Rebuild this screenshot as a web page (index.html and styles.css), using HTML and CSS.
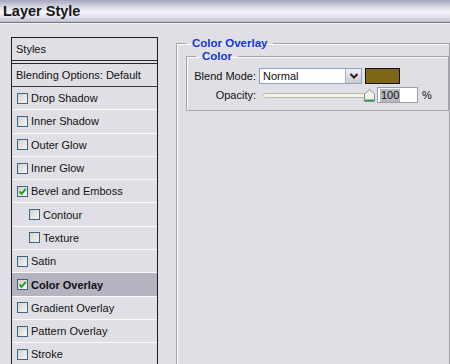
FILE: index.html
```html
<!DOCTYPE html>
<html lang="en">
<head>
  <meta charset="UTF-8" />
  <title>Layer Style</title>
  <link rel="stylesheet" href="styles.css">
</head>
<body>
  <div class="titlebar">Layer Style</div>

  <div class="main">
    <div class="styles-list">
      <div class="list-head">Styles</div>
      <div class="list-blend">Blending Options: Default</div>
      <div class="row"><span class="box"></span>Drop Shadow</div>
      <div class="row"><span class="box"></span>Inner Shadow</div>
      <div class="row"><span class="box"></span>Outer Glow</div>
      <div class="row"><span class="box"></span>Inner Glow</div>
      <div class="row"><span class="box checked"><svg viewBox="0 0 9 9" width="9" height="9"><path d="M1.5 4.5 L3.6 6.8 L7.8 1.8" fill="none" stroke="#1fa31f" stroke-width="2"/></svg></span>Bevel and Emboss</div>
      <div class="row sub"><span class="box"></span>Contour</div>
      <div class="row sub"><span class="box"></span>Texture</div>
      <div class="row"><span class="box"></span>Satin</div>
      <div class="row active"><span class="box checked"><svg viewBox="0 0 9 9" width="9" height="9"><path d="M1.5 4.5 L3.6 6.8 L7.8 1.8" fill="none" stroke="#1fa31f" stroke-width="2"/></svg></span>Color Overlay</div>
      <div class="row"><span class="box"></span>Gradient Overlay</div>
      <div class="row"><span class="box"></span>Pattern Overlay</div>
      <div class="row"><span class="box"></span>Stroke</div>
    </div>

    <fieldset class="group outer">
      <legend>Color Overlay</legend>
      <fieldset class="group inner">
        <legend>Color</legend>
        <div class="form">
          <label>Blend Mode:</label>
          <div class="ctrl">
            <div class="select">
              <span class="select-text">Normal</span>
              <span class="select-btn"><svg viewBox="0 0 10 8" width="10" height="8"><path d="M1.5 2 L5 5.5 L8.5 2" fill="none" stroke="#222" stroke-width="2"/></svg></span>
            </div>
            <div class="swatch"></div>
          </div>
          <label>Opacity:</label>
          <div class="ctrl">
            <div class="slider">
              <div class="track"></div>
              <svg class="thumb" viewBox="0 0 11 13" width="11" height="13"><path d="M0.5 5 L5.5 0.5 L10.5 5 L10.5 12.5 L0.5 12.5 Z" fill="#f2f2ee" stroke="#8a8a8a"/><path d="M1 10.5 H10 V12 H1 Z" fill="#1eaa3c"/></svg>
            </div>
            <div class="num"><span class="sel">100</span></div>
            <span class="pct">%</span>
          </div>
        </div>
      </fieldset>
    </fieldset>
  </div>
</body>
</html>
```

FILE: styles.css
```css
html, body {
  margin: 0;
  height: 364px;
  overflow: hidden;
}
body {
  background: #e0dfe5;
  font-family: "Liberation Sans", Arial, sans-serif;
  font-size: 11px;
  color: #111;
}
.titlebar {
  height: 22px;
  line-height: 23px;
  padding-left: 3px;
  font-size: 14.5px;
  font-weight: bold;
  color: #151515;
  background: linear-gradient(#a5a5bd 0%, #d6d6e4 30%, #f5f5fa 55%, #e2e2eb 75%, #bfbfd0 100%);
  border-bottom: 1px solid #75757f;
  box-shadow: 0 1px 0 #f2f2f5;
}
.main {
  display: flex;
  align-items: flex-start;
  padding: 14px 0 0 11px;
}
.styles-list {
  width: 145px;
  flex: none;
  border: 1px solid #1e1e22;
  border-bottom: none;
  background: #e0dfe5;
}
.list-head {
  height: 22px;
  line-height: 22px;
  padding-left: 4px;
  border-bottom: 4px double #2a2a2e;
}
.list-blend {
  height: 22px;
  line-height: 23px;
  padding-left: 4px;
  border-bottom: 1px solid #3a3a3e;
}
.row {
  height: 22.3px;
  display: flex;
  align-items: center;
  gap: 3px;
  padding-left: 5px;
  border-bottom: 1px solid #fbfbfd;
}
.row.sub {
  padding-left: 17px;
}
.row.active {
  background: #b4b3bf;
  font-weight: bold;
}
.box {
  width: 9px;
  height: 9px;
  border: 1px solid #3f6586;
  background: linear-gradient(135deg, #d2d2ce, #f6f6f4);
  display: flex;
  align-items: center;
  justify-content: center;
  flex: none;
}
.group {
  margin: 0;
  border: 1px solid #a3a3ab;
  box-shadow: inset 1px 1px 0 #fbfbfd;
}
.group legend {
  padding: 0 6px;
  color: #1236dc;
  font-weight: bold;
  font-size: 11.5px;
  line-height: 13px;
}
.outer {
  margin: 0 0 0 18px;
  padding: 0 0 0 9px;
  width: 400px;
  height: 400px;
  margin-top: 0;
}
.inner {
  padding: 5px 0 7px 0;
}
.inner legend {
  margin-left: 9px;
}
.form {
  display: grid;
  grid-template-columns: 69px auto;
  grid-auto-rows: 16px;
  column-gap: 3px;
  row-gap: 3px;
  align-items: center;
}
.form label {
  text-align: right;
  color: #111;
}
.ctrl {
  display: flex;
  align-items: center;
  height: 16px;
}
.select {
  width: 101px;
  height: 14px;
  border: 1px solid #8ba4bd;
  background: #fff;
  display: flex;
  align-items: center;
}
.select-text {
  flex: 1;
  padding-left: 3px;
}
.select-btn {
  width: 15px;
  height: 14px;
  background: linear-gradient(#f0f0f4, #c9c9d4);
  border-left: 1px solid #a8b2c4;
  display: flex;
  align-items: center;
  justify-content: center;
}
.swatch {
  margin-left: 3px;
  width: 33px;
  height: 14px;
  border: 1px solid #111;
  background: #806617;
}
.slider {
  position: relative;
  width: 113px;
  height: 16px;
  padding-left: 4px;
  display: flex;
  align-items: center;
}
.track {
  width: 104px;
  height: 3px;
  border: 1px solid #b9b9b0;
  border-radius: 3px;
  background: #f4f4e6;
}
.thumb {
  position: absolute;
  left: 105px;
  top: 2px;
}
.num {
  margin-left: 1px;
  width: 37px;
  height: 14px;
  border: 1px solid #9d9da5;
  background: #fff;
  display: flex;
  align-items: center;
  padding-left: 2px;
  box-sizing: content-box;
}
.sel {
  background: #b9b8c4;
  padding: 0 1px;
  line-height: 13px;
}
.pct {
  margin-left: 4px;
}
```
